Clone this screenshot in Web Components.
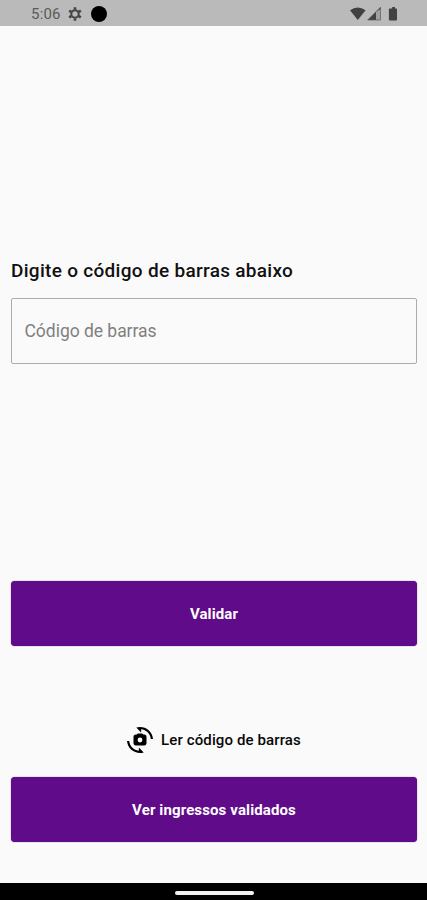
<!DOCTYPE html>
<html lang="pt-BR">
<head>
<meta charset="utf-8">
<title>Código de barras</title>
<style>
html,body{margin:0;height:100%;overflow:hidden;background:#fafafa;font-family:Roboto,"Noto Sans",sans-serif}
</style>
</head>
<body>
<ticket-app></ticket-app>
<script>
function define(name, markup) {
  const t = document.createElement('template');
  t.innerHTML = markup;
  customElements.define(name, class extends HTMLElement {
    constructor() {
      super();
      this.attachShadow({mode: 'open'}).appendChild(t.content.cloneNode(true));
    }
  });
}

define('status-bar', `
<style>
:host{display:flex;align-items:center;justify-content:space-between;box-sizing:border-box;height:26px;padding:2px 29px 0 31px;background:#bababa;color:#5a5a5a;font-size:15px}
div{display:flex;align-items:center}
svg{display:block}
.time{width:37px;line-height:18px;letter-spacing:.2px}
.dot{width:16px;height:16px;border-radius:50%;background:#000;margin-left:9px}
</style>
<div>
  <span class="time">5:06</span>
  <svg width="14" height="14" viewBox="0 0 14 14" fill="none" stroke="#424242"><circle cx="7" cy="7" r="3.7" stroke-width="2"/><g stroke-width="2.6"><path d="M7 .3v2.3M7 11.4v2.3M1.2 3.65l2 1.15M10.8 9.2l2 1.15M1.2 10.35l2-1.15M10.8 4.8l2-1.15"/></g></svg>
  <span class="dot"></span>
</div>
<div>
  <svg width="48" height="16" viewBox="0 0 48 16"><path d="M0 4.2Q7.8-1.2 15.6 4.2L7.8 14z" fill="#414141"/><path d="M30.5 1.2V14H17.7z" fill="#a0a0a0"/><path d="M26 5.7V14H17.7L30.5 1.2V3z" fill="#414141"/><path d="M30.5 1.2V14H17.7z" fill="none" stroke="#5a5a5a" stroke-width=".7"/><path d="M41 2.5h1.2V1H45v1.5h1.2q.8 0 .8.7V13.5q0 .9-.9.9h-6.3q-.9 0-.9-.9V3.2q0-.7.8-.7z" fill="#414141"/></svg>
</div>`);

define('text-field', `
<style>
:host{display:block}
.label{font-size:19px;font-weight:500;line-height:24px;color:#111;letter-spacing:.3px;white-space:nowrap}
.box{display:flex;align-items:center;box-sizing:border-box;height:66px;margin-top:15px;padding:0 0 0 12.5px;border:1px solid #acacac;border-radius:2px;color:#808080;font-size:17.5px;letter-spacing:-.03px}
</style>
<div class="label"><slot name="label"></slot></div>
<div class="box"><slot></slot></div>`);

define('primary-button', `
<style>
:host{display:flex;align-items:center;justify-content:center;box-sizing:border-box;height:65px;border-radius:4px;background:#600b89;color:#fff;font-size:15px;font-weight:700;letter-spacing:.12px;box-shadow:0 0 1px #600b89}
</style>
<slot></slot>`);

define('scan-button', `
<style>
:host{display:flex;align-items:center;justify-content:center;height:26px;gap:8px;color:#080808;font-size:15px;font-weight:500;letter-spacing:.12px}
svg{display:block}
</style>
<svg width="26" height="26" viewBox="0 0 24 24" fill="#000"><path d="M8.57.51l4.48 4.48V2.04c4.72.47 8.48 4.23 8.95 8.95h2C23.34 3.02 15.49-1.59 8.57.51zM10.95 21.96C6.23 21.49 2.47 17.73 2 13.01H0c.66 7.97 8.51 12.58 15.43 10.48l-4.48-4.48v2.95z"/><path fill-rule="evenodd" d="M16 7h-1l-1-1h-4L9 7H8c-1.1 0-2 .9-2 2v6c0 1.1.9 2 2 2h8c1.1 0 2-.9 2-2V9c0-1.1-.9-2-2-2zm-4 7.2a2.2 2.2 0 1 1 0-4.4 2.2 2.2 0 0 1 0 4.4z"/></svg>
<slot></slot>`);

define('nav-bar', `
<style>
:host{display:flex;justify-content:center;align-items:center;box-sizing:border-box;height:17px;padding:2px 0 0 1px;background:#000}
i{display:block;width:79px;height:4px;border-radius:2px;background:#f2f2f2}
</style>
<i></i>`);

define('ticket-app', `
<style>
:host{display:flex;flex-direction:column;height:900px;background:#fafafa}
main{flex:1;display:flex;flex-direction:column;padding:233px 10px 0 11px}
.validate{margin-top:217px}
scan-button{margin-top:81px}
.list{margin-top:24px}
</style>
<status-bar></status-bar>
<main>
  <text-field><span slot="label">Digite o código de barras abaixo</span>Código de barras</text-field>
  <primary-button class="validate">Validar</primary-button>
  <scan-button>Ler código de barras</scan-button>
  <primary-button class="list">Ver ingressos validados</primary-button>
</main>
<nav-bar></nav-bar>`);
</script>
</body>
</html>
